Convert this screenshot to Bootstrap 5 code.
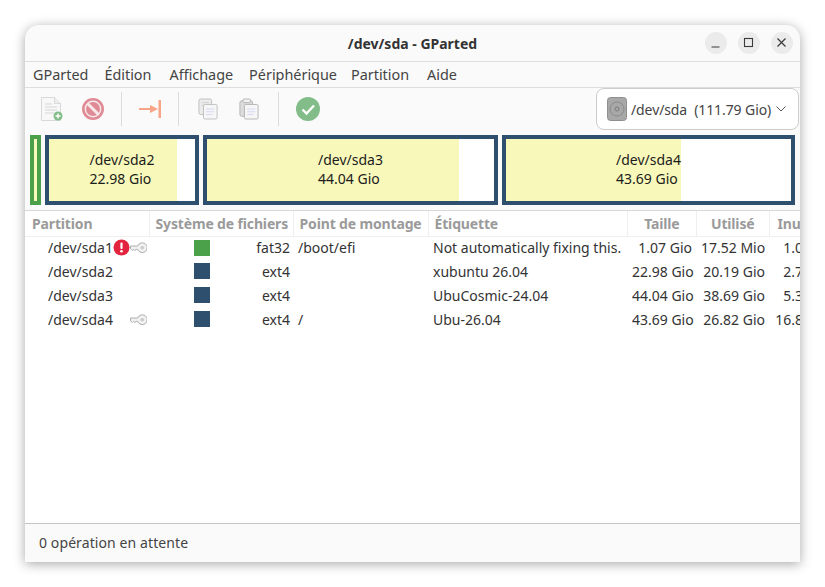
<!DOCTYPE html>
<html lang="fr">
<head>
<meta charset="utf-8">
<title>/dev/sda - GParted</title>
<link href="https://cdn.jsdelivr.net/npm/bootstrap@5.3.0/dist/css/bootstrap.min.css" rel="stylesheet">
<style>
html,body{height:100%;background:#fff;overflow:hidden}
body{font-family:"Noto Sans","Open Sans",sans-serif;font-size:14px;color:#3d3d3d;padding:25px}
.gp-win{width:775px;height:537px;background:#fafafa;border-radius:14px 14px 0 0;box-shadow:0 2px 12px rgba(0,0,0,.35);overflow:hidden}
.gp-title{height:37px;border-bottom:1px solid #dedede;position:relative}
.gp-title-text{font-weight:700;font-size:14px;color:#333}
.gp-winbtns{position:absolute;right:7px;top:7px}
.gp-wb{width:22px;height:22px;border-radius:50%;background:#ebebeb;margin-left:11px}
.gp-menu{height:26px;padding-left:8px;border-bottom:1px solid #dedede;gap:16px;color:#444;font-size:14.4px}
.gp-menu span:nth-child(2),.gp-menu span:nth-child(5){margin-right:2px}
.gp-menu span:nth-child(4){margin-right:-2px}
.gp-tool{height:47px;padding-left:6px}
.gp-tb{width:41px;height:42px;flex:none}
.gp-tb40{width:40px}
.gp-tb42{width:42px}
.gp-sep{width:1px;height:34px;background:#dcdcdc;margin:4px 8px 0}
.gp-dev{width:203px;height:42px;background:#fff;border:1px solid #ccc;border-radius:8px;padding-left:10px;gap:4px;margin-left:auto;margin-right:1px;flex:none;color:#444}
.gp-devtx{letter-spacing:-.1px}
.gp-bar{height:70px;padding-left:5px;gap:4px}
.gp-part{height:70px;border:4px solid #2f4f6f;padding-bottom:2px;background-color:#fff;background-image:linear-gradient(#f8f8ba,#f8f8ba);background-repeat:no-repeat;color:#1c1c1c;line-height:19px;flex:none}
.gp-green{border-color:#4aa14a}
.gp-list{flex:1 1 0;min-height:0;margin-top:5px;border-top:1px solid #d8d8d8;border-bottom:1px solid #c4c4c4;background:#fff;overflow:hidden}
.gp-tbl{table-layout:fixed;width:816px;margin:0;border-collapse:collapse;--bs-table-bg:#fff;color:#333}
.gp-tbl th{height:25px;line-height:19px;padding:3px 4px 3px 6px;font-weight:700;color:#9a9a9a;border-right:1px solid #efefef;border-bottom:1px solid #efefef;white-space:nowrap;overflow:hidden;letter-spacing:-.15px}
.gp-tbl th:first-child{padding-left:7px}
.gp-tbl td{height:24px;padding:0 3px 0 5px;white-space:nowrap;overflow:hidden;color:#333;border:0}
.gp-tbl td.gp-tr{padding-right:4px;text-align:right}
.gp-tbl th.gp-tr{text-align:right;padding-right:16px}
.gp-tbl th.gp-tr14{padding-right:14px}
.gp-tbl th.gp-tl{padding-left:8px;text-align:left}
.gp-tbl td.gp-name{padding-left:23px}
.gp-swatch{width:16px;height:16px;margin-left:40px;background:#2f4f6f;flex:none}
.gp-swg{background:#4aa14a}
.gp-fs{width:41px;margin-left:auto;text-align:right}
.gp-ico{width:17px;height:17px;flex:none}
.gp-nm{width:67px}
.gp-status{height:38px;padding:0 0 1px 14px;color:#444;letter-spacing:.1px}
</style>
</head>
<body>
<div class="gp-win d-flex flex-column">
  <div class="gp-title d-flex align-items-center justify-content-center flex-shrink-0">
    <span class="gp-title-text">/dev/sda - GParted</span>
    <div class="gp-winbtns d-flex">
      <div class="gp-wb d-flex align-items-center justify-content-center"><svg width="12" height="12" viewBox="0 0 12 12"><path d="M1.500 10h8" stroke="#3a3a3a" stroke-width="1.200" fill="none"/></svg></div>
      <div class="gp-wb d-flex align-items-center justify-content-center"><svg width="12" height="12" viewBox="0 0 12 12"><rect x="1.500" y="1.500" width="8" height="8" stroke="#3a3a3a" stroke-width="1.100" fill="none"/></svg></div>
      <div class="gp-wb d-flex align-items-center justify-content-center"><svg width="12" height="12" viewBox="0 0 12 12"><path d="M1.500 1.500l8 8M9.500 1.500l-8 8" stroke="#3a3a3a" stroke-width="1.200" fill="none"/></svg></div>
    </div>
  </div>
  <nav class="gp-menu d-flex align-items-center flex-shrink-0">
    <span>GParted</span><span>Édition</span><span>Affichage</span><span>Périphérique</span><span>Partition</span><span>Aide</span>
  </nav>
  <div class="gp-tool d-flex align-items-start flex-shrink-0">
    <div class="gp-tb d-flex align-items-center justify-content-center">
      <svg width="24" height="26" viewBox="0 0 24 26"><path d="M1.500 1.500h13l6 6v17h-19z" fill="#f8f8f8" stroke="#d9d9d9"/><path d="M14.500 1.500v6h6" fill="#eee" stroke="#d9d9d9"/><path d="M5 8h7M5 11h12M5 14h12M5 17h9" stroke="#d6d6d6"/><circle cx="18" cy="20" r="4.500" fill="#82bd89"/><path d="M15.500 20h5M18 17.500v5" stroke="#fff" stroke-width="1.400"/></svg>
    </div>
    <div class="gp-tb d-flex align-items-center justify-content-center">
      <svg width="22" height="22" viewBox="0 0 22 22"><circle cx="11" cy="11" r="9.700" fill="#f5e9ea" stroke="#e08a95" stroke-width="2.600"/><circle cx="11" cy="11" r="7" fill="#e08a95"/><path d="M5.500 5.500l11 11" stroke="#f5e9ea" stroke-width="3"/></svg>
    </div>
    <div class="gp-sep"></div>
    <div class="gp-tb gp-tb40 d-flex align-items-center justify-content-center">
      <svg width="22" height="18" viewBox="0 0 22 18"><path d="M0 9h13" stroke="#f7a488" stroke-width="2"/><path d="M11 5l8 4-8 4z" fill="#f7a488"/><rect x="19.500" y="0" width="2.500" height="18" fill="#f7a488"/></svg>
    </div>
    <div class="gp-sep"></div>
    <div class="gp-tb d-flex align-items-center justify-content-center">
      <svg width="20" height="22" viewBox="0 0 22 24"><rect x="1" y="1" width="14" height="17" rx="2" fill="#ececec" stroke="#bdbdbd"/><path d="M4 5h8M4 8h8" stroke="#cfcfcf"/><rect x="6" y="7" width="15" height="16" rx="1.500" fill="#f6f6f6" stroke="#bdbdbd"/><path d="M9 12h9M9 15h9M9 18h7" stroke="#d4d4f2"/></svg>
    </div>
    <div class="gp-tb gp-tb42 d-flex align-items-center justify-content-center">
      <svg width="20" height="22" viewBox="0 0 22 24"><rect x="1" y="3" width="14" height="17" rx="2" fill="#dcdcdc" stroke="#b2b2b2"/><rect x="4.500" y="1" width="8" height="4" rx="1" fill="#f2f2f2" stroke="#b2b2b2"/><rect x="6" y="7" width="15" height="16" rx="1.500" fill="#f6f6f6" stroke="#b2b2b2"/><path d="M9 12h9M9 15h9M9 18h7" stroke="#d4d4f2"/></svg>
    </div>
    <div class="gp-sep"></div>
    <div class="gp-tb d-flex align-items-center justify-content-center">
      <svg width="24" height="24" viewBox="0 0 24 24"><circle cx="12" cy="12" r="12" fill="#82bd89"/><path d="M6.500 12.500l4 4 7.500-8" stroke="#fff" stroke-width="2.400" fill="none"/></svg>
    </div>
    <div class="gp-dev d-flex align-items-center">
      <svg width="20" height="24" viewBox="0 0 20 24"><rect x=".5" y=".5" width="19" height="23" rx="3" fill="#a8a8a8" stroke="#8f8f8f"/><circle cx="10" cy="12" r="7" fill="none" stroke="#8a8a8a"/><circle cx="10" cy="12" r="2" fill="none" stroke="#7c7c7c"/></svg>
      <span class="gp-devtx">/dev/sda&nbsp; (111.79 Gio)</span>
      <svg width="12" height="8" viewBox="0 0 12 8"><path d="M1.500 1.500l4.500 4.500 4.500-4.500" stroke="#555" fill="none"/></svg>
    </div>
  </div>
  <div class="gp-bar d-flex flex-shrink-0">
    <div class="gp-part gp-green" style="width:11px"></div>
    <div class="gp-part d-flex align-items-center justify-content-center" style="width:154px;background-size:87.7% 100%"><div><div>/dev/sda2</div><div>22.98 Gio</div></div></div>
    <div class="gp-part d-flex align-items-center justify-content-center" style="width:295px;background-size:87.8% 100%"><div><div>/dev/sda3</div><div>44.04 Gio</div></div></div>
    <div class="gp-part d-flex align-items-center justify-content-center" style="width:293px;background-size:61.4% 100%"><div><div>/dev/sda4</div><div>43.69 Gio</div></div></div>
  </div>
  <div class="gp-list">
    <table class="table gp-tbl">
      <colgroup><col style="width:124px"><col style="width:144px"><col style="width:135px"><col style="width:199px"><col style="width:69px"><col style="width:73px"><col style="width:72px"></colgroup>
      <thead><tr><th>Partition</th><th>Système de fichiers</th><th>Point de montage</th><th>Étiquette</th><th class="gp-tr">Taille</th><th class="gp-tr gp-tr14">Utilisé</th><th class="gp-tl">Inutilisé</th></tr></thead>
      <tbody>
        <tr>
          <td class="gp-name"><div class="d-flex align-items-center"><span class="gp-nm">/dev/sda1</span>
            <svg class="gp-ico" viewBox="0 0 17 17"><circle cx="8.500" cy="8.500" r="8" fill="#e2243f"/><rect x="7.400" y="3.500" width="2.200" height="6.500" rx="1" fill="#fff"/><circle cx="8.500" cy="12.300" r="1.300" fill="#fff"/></svg>
            <svg class="gp-ico" viewBox="0 0 17 17"><path d="M.5 7h7.200a4.900 4.900 0 1 1 0 3.400H6.200L5 11.500 3.600 10.400 2.500 11.500.5 9.800z" fill="#f1f1f1" stroke="#aeaeae"/><circle cx="12.300" cy="8.700" r="1.800" fill="#c9c9c9"/></svg>
          </div></td>
          <td><div class="d-flex align-items-center"><div class="gp-swatch gp-swg"></div><div class="gp-fs">fat32</div></div></td>
          <td>/boot/efi</td><td>Not automatically fixing this.</td><td class="gp-tr">1.07 Gio</td><td class="gp-tr">17.52 Mio</td><td class="gp-tr">1.05 Gio</td>
        </tr>
        <tr>
          <td class="gp-name">/dev/sda2</td>
          <td><div class="d-flex align-items-center"><div class="gp-swatch"></div><div class="gp-fs">ext4</div></div></td>
          <td></td><td>xubuntu 26.04</td><td class="gp-tr">22.98 Gio</td><td class="gp-tr">20.19 Gio</td><td class="gp-tr">2.79 Gio</td>
        </tr>
        <tr>
          <td class="gp-name">/dev/sda3</td>
          <td><div class="d-flex align-items-center"><div class="gp-swatch"></div><div class="gp-fs">ext4</div></div></td>
          <td></td><td>UbuCosmic-24.04</td><td class="gp-tr">44.04 Gio</td><td class="gp-tr">38.69 Gio</td><td class="gp-tr">5.35 Gio</td>
        </tr>
        <tr>
          <td class="gp-name"><div class="d-flex align-items-center"><span class="gp-nm">/dev/sda4</span><span class="gp-ico"></span>
            <svg class="gp-ico" viewBox="0 0 17 17"><path d="M.5 7h7.200a4.900 4.900 0 1 1 0 3.400H6.200L5 11.500 3.600 10.400 2.500 11.500.5 9.800z" fill="#f1f1f1" stroke="#aeaeae"/><circle cx="12.300" cy="8.700" r="1.800" fill="#c9c9c9"/></svg>
          </div></td>
          <td><div class="d-flex align-items-center"><div class="gp-swatch"></div><div class="gp-fs">ext4</div></div></td>
          <td>/</td><td>Ubu-26.04</td><td class="gp-tr">43.69 Gio</td><td class="gp-tr">26.82 Gio</td><td class="gp-tr">16.87 Gio</td>
        </tr>
      </tbody>
    </table>
  </div>
  <div class="gp-status d-flex align-items-center flex-shrink-0">0 opération en attente</div>
</div>
<script src="https://cdn.jsdelivr.net/npm/bootstrap@5.3.0/dist/js/bootstrap.bundle.min.js"></script>
</body>
</html>
